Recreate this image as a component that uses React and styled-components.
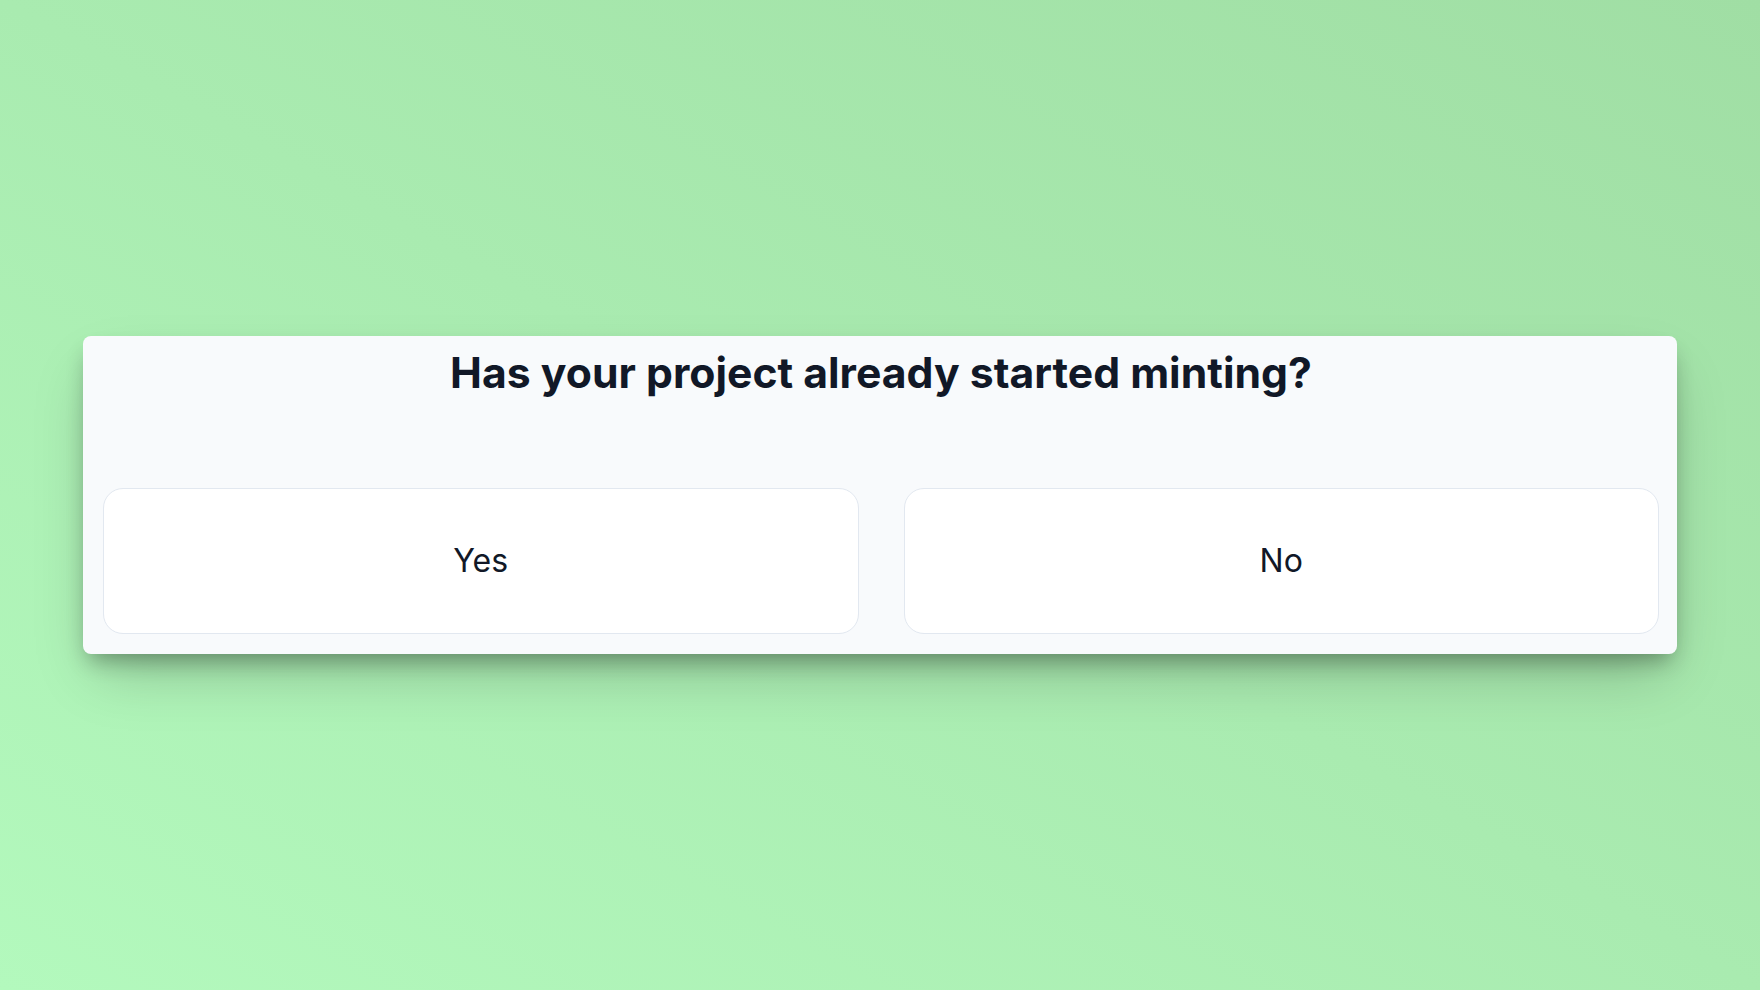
import React from "react";
import styled, { createGlobalStyle } from "styled-components";

const Global = createGlobalStyle`
  html, body { margin: 0; padding: 0; }
  body {
    font-family: Inter, "Noto Sans", sans-serif;
    -webkit-font-smoothing: antialiased;
  }
`;

const Page = styled.div`
  width: 1760px;
  height: 990px;
  box-sizing: border-box;
  display: flex;
  align-items: center;
  justify-content: center;
  padding: 0 83px;
  background: linear-gradient(to top right, #b3f9bd 0%, #a9ebb0 50%, #a0dea4 100%);
`;

const Card = styled.section`
  width: 100%;
  box-sizing: border-box;
  margin-top: -1px;
  background: #f8fafc;
  border-radius: 8px;
  padding: 16px 18px 20px 20px;
  box-shadow: 0 12px 22px -6px rgba(0, 0, 0, 0.32),
    0 28px 56px -12px rgba(0, 0, 0, 0.22);
  display: flex;
  flex-direction: column;
`;

const Title = styled.h1`
  margin: 0 0 94px;
  text-align: center;
  font-size: 42.7px;
  line-height: 42px;
  font-weight: 700;
  color: #111827;
`;

const Options = styled.div`
  display: grid;
  grid-template-columns: 1fr 1fr;
  gap: 45px;
`;

const Option = styled.button`
  height: 146px;
  box-sizing: border-box;
  background: #ffffff;
  border: 1px solid #e2e8f0;
  border-radius: 20px;
  font-family: inherit;
  font-size: 32px;
  font-weight: 400;
  color: #111827;
  cursor: pointer;
  display: flex;
  align-items: center;
  justify-content: center;
`;

export default function App() {
  return (
    <>
      <Global />
      <Page>
        <Card>
          <Title>Has your project already started minting?</Title>
          <Options>
            <Option>Yes</Option>
            <Option>No</Option>
          </Options>
        </Card>
      </Page>
    </>
  );
}
